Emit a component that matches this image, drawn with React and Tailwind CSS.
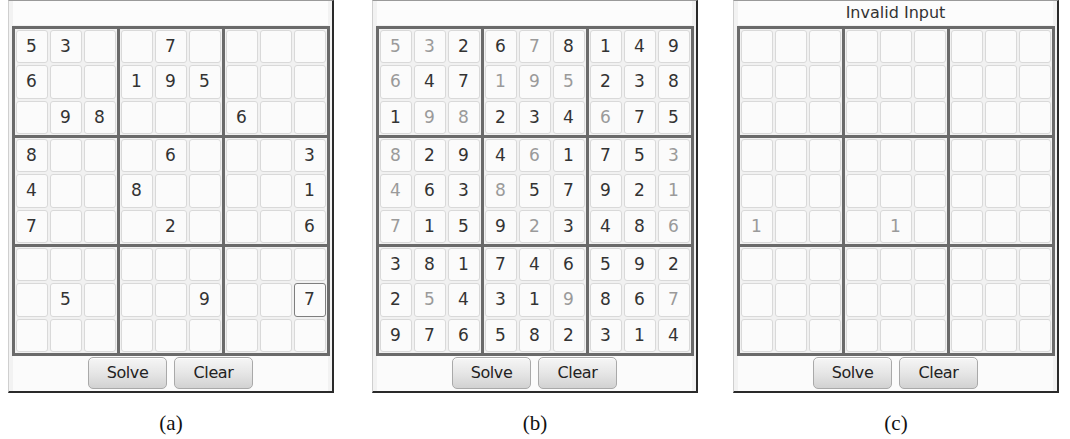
import React from "react";

const puzzleA = [
  "53__7____",
  "6__195___",
  "_98___6__",
  "8___6___3",
  "4__8____1",
  "7___2___6",
  "_________",
  "_5___9__7",
  "_________",
];

const solved = [
  "532678149",
  "647195238",
  "198234675",
  "829461753",
  "463857921",
  "715923486",
  "381746592",
  "254319867",
  "976582314",
];

const puzzleC = [
  "_________",
  "_________",
  "_________",
  "_________",
  "_________",
  "1___1____",
  "_________",
  "_________",
  "_________",
];

// each cell: { v, grey, focus }
function buildA() {
  return puzzleA.map((row, r) =>
    row.split("").map((ch, c) => ({
      v: ch === "_" ? "" : ch,
      grey: false,
      focus: r === 7 && c === 8,
    }))
  );
}

function buildB() {
  return solved.map((row, r) =>
    row.split("").map((ch, c) => ({
      v: ch,
      grey: puzzleA[r][c] !== "_",
      focus: false,
    }))
  );
}

function buildC() {
  return puzzleC.map((row) =>
    row.split("").map((ch) => ({
      v: ch === "_" ? "" : ch,
      grey: true,
      focus: false,
    }))
  );
}

function Cell({ cell }) {
  return (
    <div
      className={`flex items-center justify-center rounded-[3px] bg-[#fbfbfb] text-[17px] leading-none border ${
        cell.focus ? "border-[#7e7e7e] border-[1.5px]" : "border-[#d9d9d9]"
      } ${cell.grey ? "text-[#9a9a9a]" : "text-[#333]"}`}
      style={{ fontFamily: '"DejaVu Sans", "Liberation Sans", sans-serif' }}
    >
      {cell.v}
    </div>
  );
}

function Board({ cells }) {
  const boxes = [];
  for (let br = 0; br < 3; br++) {
    for (let bc = 0; bc < 3; bc++) {
      const inner = [];
      for (let r = 0; r < 3; r++) {
        for (let c = 0; c < 3; c++) {
          inner.push(
            <Cell key={`${r}-${c}`} cell={cells[br * 3 + r][bc * 3 + c]} />
          );
        }
      }
      boxes.push(
        <div
          key={`${br}-${bc}`}
          className="grid grid-cols-3 grid-rows-3 gap-[2px] p-[1px] bg-[#f1f1f1] w-[102px] h-[106px]"
        >
          {inner}
        </div>
      );
    }
  }
  return (
    <div className="grid grid-cols-3 gap-[3px] border-[3px] border-[#6a6a6a] bg-[#6a6a6a] w-fit mx-auto">
      {boxes}
    </div>
  );
}

function Button({ children }) {
  return (
    <button
      className="w-[79px] h-[32px] rounded-[5px] border border-[#a9a9a9] bg-gradient-to-b from-[#f6f6f6] via-[#e6e6e6] to-[#d2d2d2] text-[16px] text-[#222] tracking-[-0.4px] shadow-[inset_0_1px_0_#ffffff]"
      style={{ fontFamily: '"DejaVu Sans", "Liberation Sans", sans-serif' }}
    >
      {children}
    </button>
  );
}

function Panel({ cells, label, caption, className }) {
  return (
    <div className={`flex flex-col items-center ${className}`}>
      <div className="w-[326px] bg-[#f2f2f2] border-t border-t-[#9a9a9a] border-l border-l-[#cfcfcf] border-r-[2px] border-r-[#2a2a2a] border-b-[2px] border-b-[#2a2a2a]">
        <div
          className="h-[24px] mx-[4px] bg-[#fcfcfc] flex items-center justify-center text-[16px] text-[#333]"
          style={{ fontFamily: '"DejaVu Sans", "Liberation Sans", sans-serif' }}
        >
          {label}
        </div>
        <div className="mt-[1px]">
          <Board cells={cells} />
        </div>
        <div className="flex justify-center gap-[7px] pt-[1px] pb-[2px] mx-[4px] bg-[#fbfbfb]">
          <Button>Solve</Button>
          <Button>Clear</Button>
        </div>
      </div>
      <div
        className="mt-[15px] text-[21px] text-[#111]"
        style={{ fontFamily: '"Liberation Serif", serif' }}
      >
        {caption}
      </div>
    </div>
  );
}

export default function App() {
  return (
    <div className="w-[1070px] h-[439px] bg-white flex items-start">
      <Panel cells={buildA()} label="" caption="(a)" className="ml-[8px]" />
      <Panel cells={buildB()} label="" caption="(b)" className="ml-[38px]" />
      <Panel
        cells={buildC()}
        label="Invalid Input"
        caption="(c)"
        className="ml-[35px]"
      />
    </div>
  );
}
